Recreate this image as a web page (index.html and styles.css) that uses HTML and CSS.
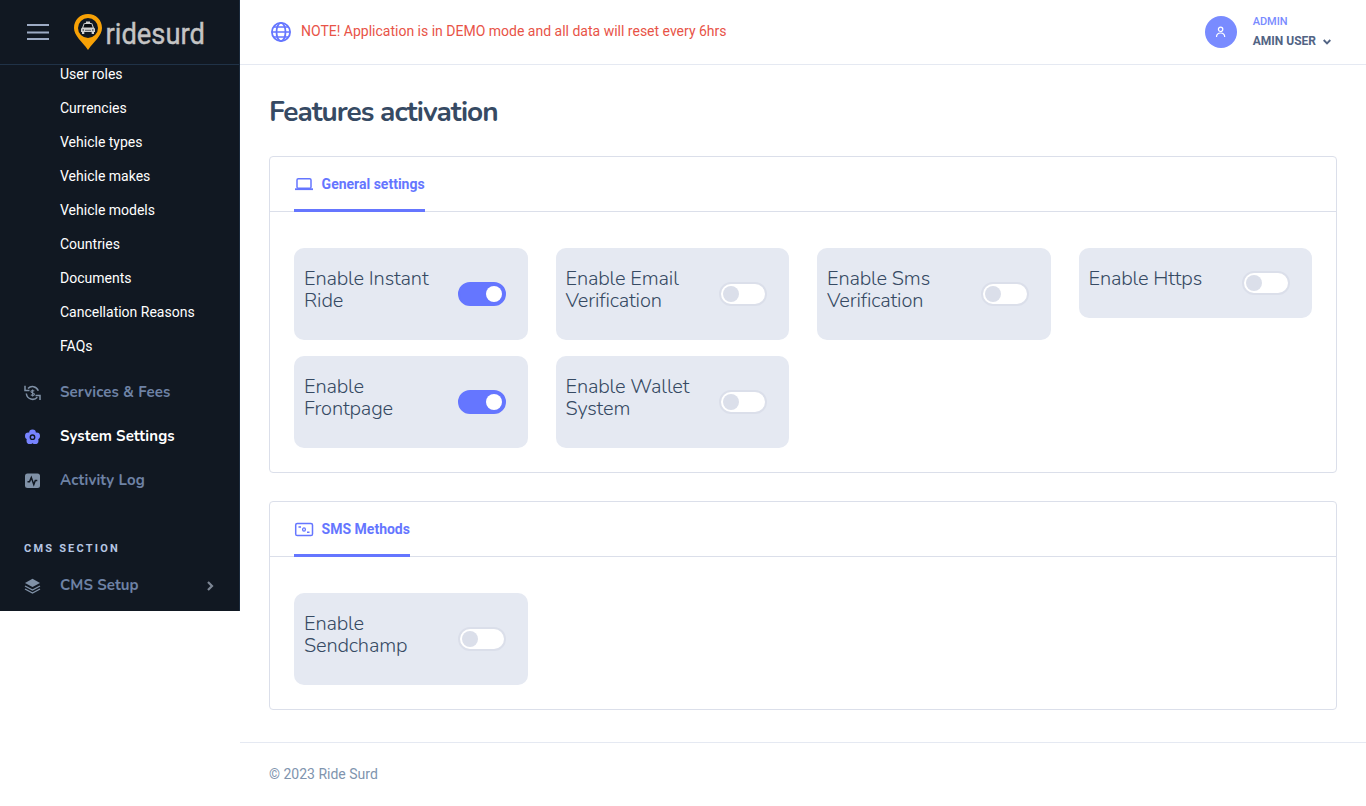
FILE: index.html
```html
<!DOCTYPE html>
<html lang="en">
<head>
<meta charset="utf-8">
<title>Features activation</title>
<link rel="stylesheet" href="styles.css">
</head>
<body>
<div class="app">
  <aside class="sidebar">
    <div class="brand">
      <svg class="burger" width="22" height="18" viewBox="0 0 22 18"><path d="M0 2h22M0 9.500h22M0 16h22" stroke="#9dabc4" stroke-width="1.800"/></svg>
      <svg class="logo" width="136" height="40" viewBox="0 0 136 40">
        <path d="M15 2C7 2 1 8 1 16c0 8 8 13 14 22 6-9 14-14 14-22C29 8 23 2 15 2z" fill="#f7a106"/>
        <circle cx="15" cy="16" r="10" fill="#111822"/>
        <path d="M13 9.500h4v1.200l2.300.8 1.500 4 1.200 1.200v3.300h-1v2h-2.300v-2h-7.400v2H9v-2H8v-3.300l1.200-1.200 1.500-4 2.300-.8z" fill="#d0d0d0"/>
        <path d="M11.500 12h7l1.200 3.500h-9.400z" fill="#080b10"/>
        <path d="M9.500 18h1.500m1.500.3h1m1 0h1m1 0h1m1.500-.3h1.500" stroke="#111822" stroke-width="1.200"/>
        <text class="logo-text" x="32.500" y="31.800" textLength="99.500" lengthAdjust="spacingAndGlyphs">ridesurd</text>
      </svg>
    </div>
    <nav class="menu">
      <ul class="submenu">
        <li>User roles</li><li>Currencies</li><li>Vehicle types</li><li>Vehicle makes</li><li>Vehicle models</li><li>Countries</li><li>Documents</li><li>Cancellation Reasons</li><li>FAQs</li>
      </ul>
      <a class="item">
        <svg width="17" height="16" viewBox="0 0 17 16" fill="none" stroke="#8091a7" stroke-width="1.500"><path d="M4 3.600C7 .3 12.500 1 14.300 5.800M2.300 8.500c.8 6 7.700 7.600 11 3.700"/><path d="M1 .8v4.600h4.500M16 15v-4.600h-4.500"/><path d="M10.300 6.200C9.200 5.200 6.900 5.300 7 6.700c.1 1.600 3.400.9 3.400 2.500 0 1.400-2.300 1.500-3.600.5M8.600 4.600v6.800" stroke-width="1.100"/></svg>
        <span>Services &amp; Fees</span>
      </a>
      <a class="item active">
        <svg width="17" height="16" viewBox="0 0 17 16"><g fill="#7884ff"><circle cx="8.500" cy="4" r="3.400"/><circle cx="4.400" cy="7" r="3.400"/><circle cx="12.600" cy="7" r="3.400"/><circle cx="5.900" cy="11.700" r="3.400"/><circle cx="11.100" cy="11.700" r="3.400"/><circle cx="8.500" cy="8.500" r="4.800"/></g><circle cx="8.500" cy="8.200" r="2.200" fill="none" stroke="#111822" stroke-width="1.400"/></svg>
        <span>System Settings</span>
      </a>
      <a class="item">
        <svg width="17" height="16" viewBox="0 0 17 16"><rect x="1" y=".6" width="15" height="14.500" rx="2.500" fill="#8091a7"/><path d="M3.500 8.800h2l1.800-4.200 2.500 7 1.500-4.200h2" fill="none" stroke="#111822" stroke-width="1.500"/></svg>
        <span>Activity Log</span>
      </a>
      <h6 class="heading">CMS SECTION</h6>
      <a class="item">
        <svg width="17" height="16" viewBox="0 0 17 16"><path d="M8.500.8 16 5 8.500 9 1 5z" fill="#8091a7"/><path d="M1 8l7.500 4L16 8M1 11l7.500 4 7.500-4" fill="none" stroke="#8091a7" stroke-width="1.400"/></svg>
        <span>CMS Setup</span>
        <svg class="chevron" width="8" height="10" viewBox="0 0 8 10"><path d="M2 1l4 4-4 4" fill="none" stroke="#7d8694" stroke-width="2.200"/></svg>
      </a>
    </nav>
  </aside>

  <div class="main">
    <header class="topbar">
      <svg width="20" height="20" viewBox="0 0 20 20" fill="none" stroke="#6576ff" stroke-width="1.800"><circle cx="10" cy="10" r="9.100"/><ellipse cx="10" cy="10" rx="4.500" ry="9.100"/><path d="M1 10h18M2.500 5h15M2.500 15h15" stroke-width="1.500"/></svg>
      <span class="note">NOTE! Application is in DEMO mode and all data will reset every 6hrs</span>
      <div class="user">
        <div class="avatar"><svg width="12" height="12" viewBox="0 0 12 12" fill="none" stroke="#fff" stroke-width="1.200"><circle cx="5.600" cy="3.300" r="2.200"/><path d="M1.500 11c0-2.700 1.500-4 4.100-4s4.100 1.300 4.100 4"/></svg></div>
        <div class="who">
          <span class="role">ADMIN</span>
          <span class="name">AMIN USER <svg width="8" height="6" viewBox="0 0 8 6"><path d="M.7 1 4 4.300 7.300 1" fill="none" stroke="#526484" stroke-width="1.900"/></svg></span>
        </div>
      </div>
    </header>

    <main class="content">
      <h1 class="title">Features activation</h1>

      <section class="card">
        <div class="tabs">
          <div class="tab"><svg width="20" height="16" viewBox="0 0 20 16" fill="none" stroke="#6576ff"><rect x="3" y="2.700" width="14" height="9.500" rx="1.300" stroke-width="1.500"/><path d="M1 13.200h18" stroke-width="1.800"/></svg><span>General settings</span></div>
        </div>
        <div class="grid">
          <div class="tile"><span>Enable Instant<br>Ride</span><i class="switch on"></i></div>
          <div class="tile"><span>Enable Email<br>Verification</span><i class="switch"></i></div>
          <div class="tile"><span>Enable Sms<br>Verification</span><i class="switch"></i></div>
          <div class="tile"><span>Enable Https</span><i class="switch"></i></div>
          <div class="tile"><span>Enable<br>Frontpage</span><i class="switch on"></i></div>
          <div class="tile"><span>Enable Wallet<br>System</span><i class="switch"></i></div>
        </div>
      </section>

      <section class="card">
        <div class="tabs">
          <div class="tab"><svg width="20" height="16" viewBox="0 0 20 16" fill="none" stroke="#6576ff"><rect x="1.700" y="2.500" width="16.800" height="12" rx="1.600" stroke-width="1.500"/><ellipse cx="10" cy="8.500" rx="1.400" ry="1.700" stroke-width="1.300"/><path d="M4.500 6h2.500M13 11.300h2.500" stroke-width="1.400"/></svg><span>SMS Methods</span></div>
        </div>
        <div class="grid">
          <div class="tile"><span>Enable<br>Sendchamp</span><i class="switch"></i></div>
        </div>
      </section>
    </main>
    <footer class="footer">© 2023 Ride Surd</footer>
  </div>
</div>
</body>
</html>
```
FILE: styles.css
```css
* { box-sizing: border-box; }
body { margin: 0; background: #fff; color: #526484; font: 14px/22px Roboto, "Liberation Sans", sans-serif; }
svg { flex: none; display: block; }
.app { display: flex; height: 806px; overflow: hidden; }
.sidebar { width: 240px; height: 611px; background: #111822; overflow: hidden; flex: none; border-right: 1px solid #1b2a3c; }
.brand { height: 65px; border-bottom: 1px solid #203247; display: flex; align-items: center; padding-left: 27px; }
.logo { margin-left: 24px; overflow: visible; }
.logo-text { font: 30px Roboto, sans-serif; fill: #c4c4c4; stroke: #c4c4c4; stroke-width: .4px; }
.menu { overflow: hidden; height: 546px; }
.submenu { list-style: none; margin: -8px 0 8px; padding: 0 0 0 60px; color: #fff; line-height: 34px; }
.item { display: flex; align-items: center; height: 44px; padding: 0 25px 0 24px; color: #6e82a5; font: bold 15px/24px Nunito, Lato, sans-serif; letter-spacing: .1px; }
.item span { margin: -2px 0 0 19px; }
.item.active { color: #fff; }
.chevron { margin: -1px 0 0 auto; }
.heading { margin: 35px 0 4px; padding-left: 24px; color: #b6c6e3; font: bold 11px/22px Roboto, sans-serif; letter-spacing: 2.2px; }
.main { flex: 1; min-width: 0; }
.topbar { height: 65px; border-bottom: 1px solid #e5e9f2; display: flex; align-items: center; padding: 0 35px 0 31px; }
.note { margin: -2px 0 0 10px; color: #e85347; }
.user { margin-left: auto; display: flex; align-items: center; }
.avatar { width: 32px; height: 32px; border-radius: 50%; background: #798bff; display: flex; align-items: center; justify-content: center; }
.who { margin-left: 16px; display: flex; flex-direction: column; }
.role { color: #798bff; font-size: 11px; font-weight: 500; line-height: 18px; letter-spacing: -.05px; }
.name { display: flex; align-items: center; gap: 7px; font-size: 12px; font-weight: bold; line-height: 21px; }
.name svg { margin-top: 2px; }
.content { padding: 30px 29px 0; }
.title { margin: 0 0 26px; color: #364a63; font: bold 28px/35px Nunito, Lato, sans-serif; letter-spacing: -.98px; }
.card { border: 1px solid #dbdfea; border-radius: 4px; margin-bottom: 28px; }
.tabs { height: 55px; padding: 0 24px; border-bottom: 1px solid #dbdfea; display: flex; }
.tab { height: 55px; border-bottom: 3px solid #6576ff; display: flex; align-items: center; gap: 7.600px; color: #6576ff; font-weight: bold; padding-top: 2px; }
.grid { padding: 36px 24px 24px; display: grid; grid-template-columns: repeat(4, 1fr); column-gap: 28px; row-gap: 16px; align-items: start; }
.tile { background: #e5e9f2; border-radius: 10px; padding: 20px 22px 28px 10px; display: flex; justify-content: space-between; color: #364a63; font: 300 20px/22px Nunito, Lato, sans-serif; letter-spacing: -.14px; white-space: nowrap; }
.switch { align-self: center; width: 48px; height: 24px; margin-bottom: -8px; border: 2px solid #dbdfea; border-radius: 12px; background: #fff; display: flex; align-items: center; padding: 0 2px; flex: none; }
.switch::before { content: ""; width: 16px; height: 16px; border-radius: 50%; background: #dbdfea; }
.switch.on { background: #6576ff; border-color: #6576ff; justify-content: flex-end; }
.switch.on::before { background: #fff; }
.footer { margin-top: 32px; border-top: 1px solid #e5e9f2; padding: 20px 29px; color: #8094ae; }
.card:last-child { margin-bottom: 0; }
```
